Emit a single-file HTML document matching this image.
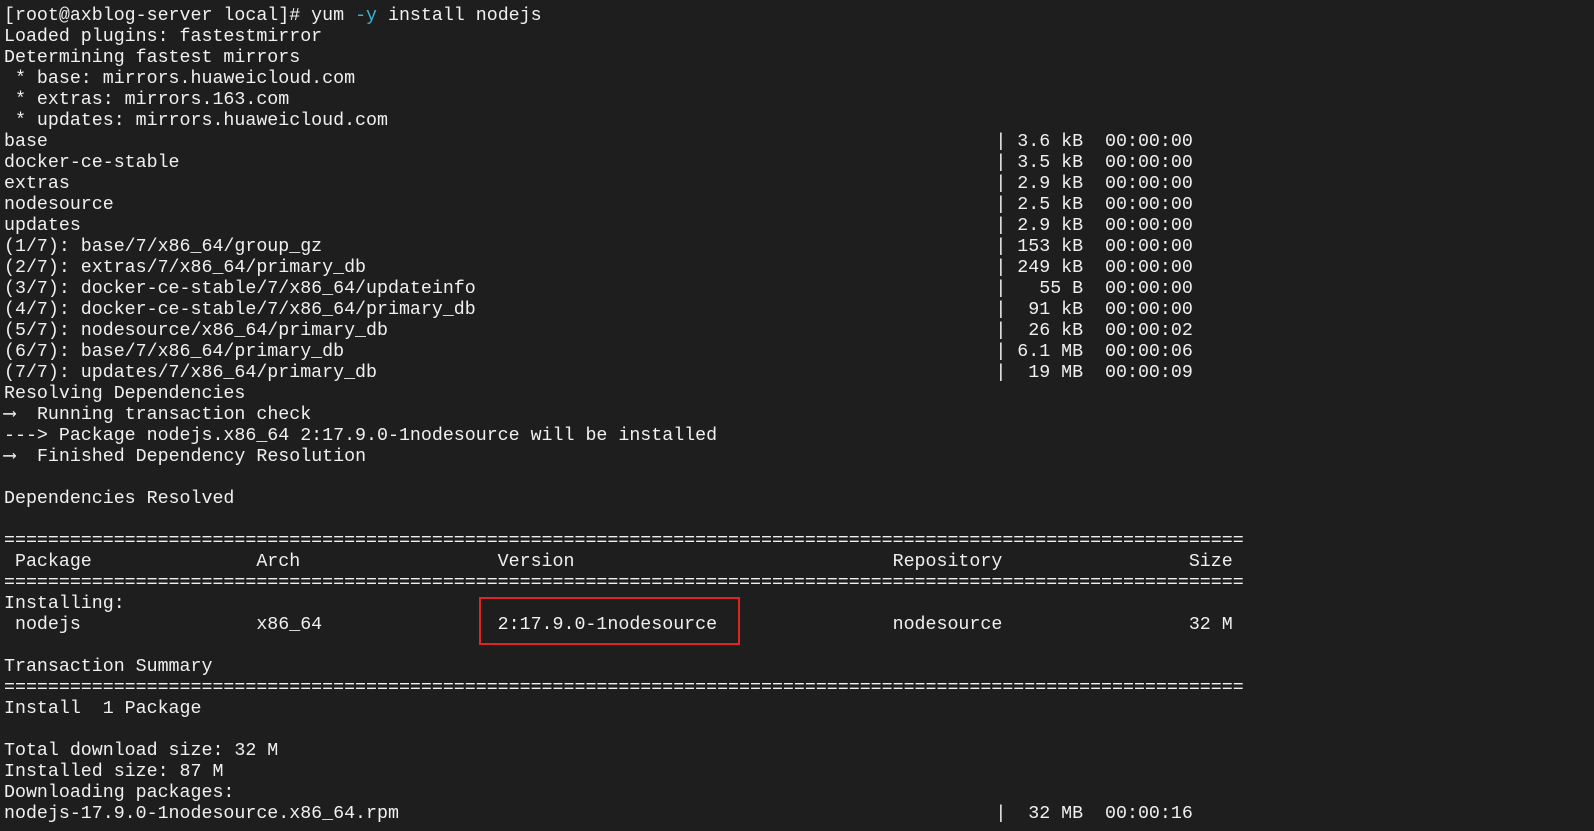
<!DOCTYPE html>
<html><head><style>
body{margin:0;background:#1e1e1e;width:1594px;height:831px;overflow:hidden}
pre{margin:0;position:absolute;left:4px;top:5.5px;font:18.3px/21px "Liberation Mono",monospace;color:#f0f0f0}
.l{position:relative;height:21px;white-space:pre}
.r{position:absolute;left:calc(90ch + 4px);top:0;white-space:pre}
.c{position:absolute;top:0;white-space:pre}
.box{position:absolute;left:479px;top:597px;width:257px;height:44px;border:2.5px solid #e02424}
</style></head><body>
<pre><div class="l">[root@axblog-server local]# yum <span style="color:#3cb4d8">-y</span> install nodejs</div><div class="l">Loaded plugins: fastestmirror</div><div class="l">Determining fastest mirrors</div><div class="l"> * base: mirrors.huaweicloud.com</div><div class="l"> * extras: mirrors.163.com</div><div class="l"> * updates: mirrors.huaweicloud.com</div><div class="l">base<span class="r">| 3.6 kB  00:00:00</span></div><div class="l">docker-ce-stable<span class="r">| 3.5 kB  00:00:00</span></div><div class="l">extras<span class="r">| 2.9 kB  00:00:00</span></div><div class="l">nodesource<span class="r">| 2.5 kB  00:00:00</span></div><div class="l">updates<span class="r">| 2.9 kB  00:00:00</span></div><div class="l">(1/7): base/7/x86_64/group_gz<span class="r">| 153 kB  00:00:00</span></div><div class="l">(2/7): extras/7/x86_64/primary_db<span class="r">| 249 kB  00:00:00</span></div><div class="l">(3/7): docker-ce-stable/7/x86_64/updateinfo<span class="r">|   55 B  00:00:00</span></div><div class="l">(4/7): docker-ce-stable/7/x86_64/primary_db<span class="r">|  91 kB  00:00:00</span></div><div class="l">(5/7): nodesource/x86_64/primary_db<span class="r">|  26 kB  00:00:02</span></div><div class="l">(6/7): base/7/x86_64/primary_db<span class="r">| 6.1 MB  00:00:06</span></div><div class="l">(7/7): updates/7/x86_64/primary_db<span class="r">|  19 MB  00:00:09</span></div><div class="l">Resolving Dependencies</div><div class="l">⟶  Running transaction check</div><div class="l">---&gt; Package nodejs.x86_64 2:17.9.0-1nodesource will be installed</div><div class="l">⟶  Finished Dependency Resolution</div><div class="l"></div><div class="l">Dependencies Resolved</div><div class="l"></div><div class="l">=================================================================================================================</div><div class="l"> Package<span class="c" style="left:23ch">Arch</span><span class="c" style="left:45ch">Version</span><span class="c" style="left:81ch">Repository</span><span class="c" style="left:108ch">Size</span></div><div class="l">=================================================================================================================</div><div class="l">Installing:</div><div class="l"> nodejs<span class="c" style="left:23ch">x86_64</span><span class="c" style="left:45ch">2:17.9.0-1nodesource</span><span class="c" style="left:81ch">nodesource</span><span class="c" style="left:108ch">32 M</span></div><div class="l"></div><div class="l">Transaction Summary</div><div class="l">=================================================================================================================</div><div class="l">Install  1 Package</div><div class="l"></div><div class="l">Total download size: 32 M</div><div class="l">Installed size: 87 M</div><div class="l">Downloading packages:</div><div class="l">nodejs-17.9.0-1nodesource.x86_64.rpm<span class="r">|  32 MB  00:00:16</span></div></pre>
<div class="box"></div>
</body></html>
